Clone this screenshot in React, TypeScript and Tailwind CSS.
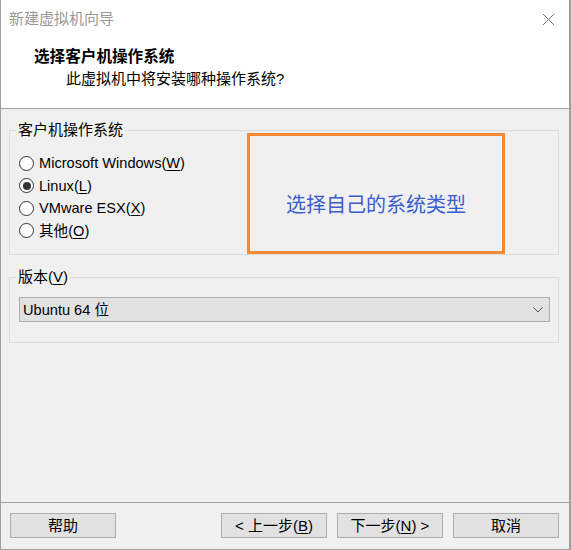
const font = { fontFamily: '"Liberation Sans", "Noto Sans CJK SC", sans-serif' }

function U({ children }: { children: string }) {
  return <span className="underline underline-offset-2">{children}</span>
}

function Radio({ checked, children }: { checked?: boolean; children: React.ReactNode }) {
  return (
    <div className="flex h-[22.5px] items-center">
      <span className="flex h-[15px] w-[15px] items-center justify-center rounded-full border border-[#333] bg-white">
        {checked && <span className="h-[8px] w-[8px] rounded-full bg-[#333]" />}
      </span>
      <span className="ml-[5px] text-[14.6px] leading-[20px] text-black">{children}</span>
    </div>
  )
}

function Btn({ children }: { children: React.ReactNode }) {
  return (
    <button className="flex h-[25px] w-[106px] items-center justify-center border border-[#adadad] bg-[#e1e1e1] text-[15px] leading-[20px] text-black">
      {children}
    </button>
  )
}

export default function App() {
  return (
    <div
      className="relative flex h-[550px] w-[571px] flex-col border-b border-l border-r-2 border-[#a0a0a0] bg-[#f0f0f0]"
      style={font}
    >
      {/* title bar */}
      <div className="flex h-[38px] items-center justify-between bg-white pl-[8px] pr-[14px]">
        <span className="text-[15px] leading-[20px] text-[#999]">新建虚拟机向导</span>
        <svg width="13" height="13" viewBox="0 0 13 13">
          <path d="M1 1 L12 12 M12 1 L1 12" stroke="#707070" strokeWidth="1" fill="none" />
        </svg>
      </div>

      {/* header */}
      <div className="flex flex-col bg-white pb-[19px] pt-[9px]">
        <div className="pl-[33px] text-[15.6px] font-bold leading-[20px] text-black">选择客户机操作系统</div>
        <div className="mt-[2px] pl-[65px] text-[15px] leading-[20px] text-black">此虚拟机中将安装哪种操作系统?</div>
      </div>
      <div className="h-px bg-[#a0a0a0]" />

      {/* body */}
      <div className="flex flex-1 flex-col pl-[8px] pr-[10px] pt-[11px]">
        <fieldset className="border border-[#dcdcdc] pb-[12px] pl-[9px] pr-[8px]">
          <legend className="-ml-[3px] px-[2px] text-[15px] leading-[20px] text-black">客户机操作系统</legend>
          <div className="flex flex-col pt-[12px]">
            <Radio>
              Microsoft Windows(<U>W</U>)
            </Radio>
            <Radio checked>
              Linux(<U>L</U>)
            </Radio>
            <Radio>
              VMware ESX(<U>X</U>)
            </Radio>
            <Radio>
              其他(<U>O</U>)
            </Radio>
          </div>
        </fieldset>

        <fieldset className="mt-[12px] border border-[#dcdcdc] pb-[20px] pl-[9px] pr-[8px]">
          <legend className="-ml-[3px] px-[2px] text-[15px] leading-[20px] text-black">
            版本(<U>V</U>)
          </legend>
          <div className="mt-[10px] flex h-[25px] items-center justify-between border border-[#adadad] bg-[#e1e1e1] pl-[3px] pr-[6px]">
            <span className="text-[14.6px] leading-[20px] text-black">Ubuntu 64 位</span>
            <svg width="10" height="6" viewBox="0 0 10 6">
              <path d="M0.5 0.5 L5 5 L9.5 0.5" stroke="#555" strokeWidth="1" fill="none" />
            </svg>
          </div>
        </fieldset>
      </div>

      {/* footer */}
      <div className="h-px bg-[#a0a0a0]" />
      <div className="flex h-[46px] items-start pl-[9px] pr-[10px] pt-[10px]">
        <Btn>帮助</Btn>
        <div className="flex-1" />
        <div className="flex gap-[10px]">
          <Btn>
            &lt; 上一步(<U>B</U>)
          </Btn>
          <Btn>
            下一步(<U>N</U>) &gt;
          </Btn>
          <Btn>取消</Btn>
        </div>
      </div>

      {/* annotation overlay */}
      <div className="absolute left-[246px] top-[133px] flex h-[121px] w-[258px] justify-center border-[3px] border-[#f68a35] pt-[55px]">
        <span className="text-[20px] leading-[28px] text-[#3a5ccc]">选择自己的系统类型</span>
      </div>
    </div>
  )
}
